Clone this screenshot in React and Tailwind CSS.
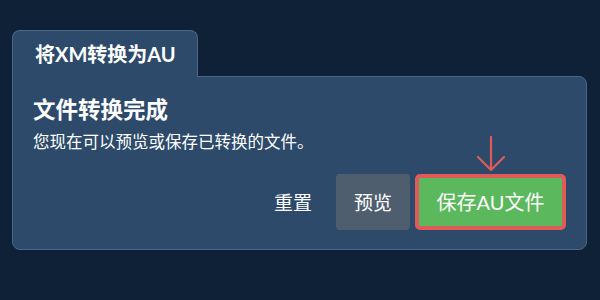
import React from 'react';

const font = { fontFamily: 'Lato, "Noto Sans CJK SC", sans-serif' };

const App = () => {
  return (
    <div className="w-[600px] h-[300px] bg-[#0f2137] pt-[30px] px-[12px]" style={font}>
      <div className="flex">
        <div className="w-[186px] h-[47px] -mb-px relative z-10 bg-[#2d4a6a] border border-b-0 border-[#4a6786] rounded-t-[8px] flex items-center pl-[22px]">
          <span className="text-[20px] font-bold text-white leading-none">将XM转换为AU</span>
        </div>
      </div>
      <div className="w-[575px] h-[174px] bg-[#2d4a6a] border border-[#4a6786] rounded-b-[8px] rounded-tr-[8px] px-[20px] pt-[18px]">
        <h2 className="text-[22.5px] font-semibold text-white leading-[30px]">文件转换完成</h2>
        <p className="text-[16.5px] text-white leading-[22px] mt-[6px]">您现在可以预览或保存已转换的文件。</p>
        <div className="flex justify-end items-center mt-[21px]">
          <button className="text-[19px] text-white mr-[24px] leading-none">重置</button>
          <button className="h-[56px] px-[18px] bg-[#4e5e6f] rounded-[4px] text-[19px] text-white leading-none">预览</button>
          <div className="relative ml-[5px]">
            <svg className="absolute left-1/2 -translate-x-1/2 -top-[38px]" width="30" height="36" viewBox="0 0 30 36" fill="none">
              <path d="M15 1 V34 M2 21 L15 34 L28 21" stroke="#e05a5a" strokeWidth="2.2" strokeLinecap="round" strokeLinejoin="round" />
            </svg>
            <button className="h-[56px] w-[151px] bg-[#5cb85c] border-[4px] border-[#e05a5a] rounded-[5px] text-[20px] text-white leading-none">保存AU文件</button>
          </div>
        </div>
      </div>
    </div>
  );
};

export default App;
